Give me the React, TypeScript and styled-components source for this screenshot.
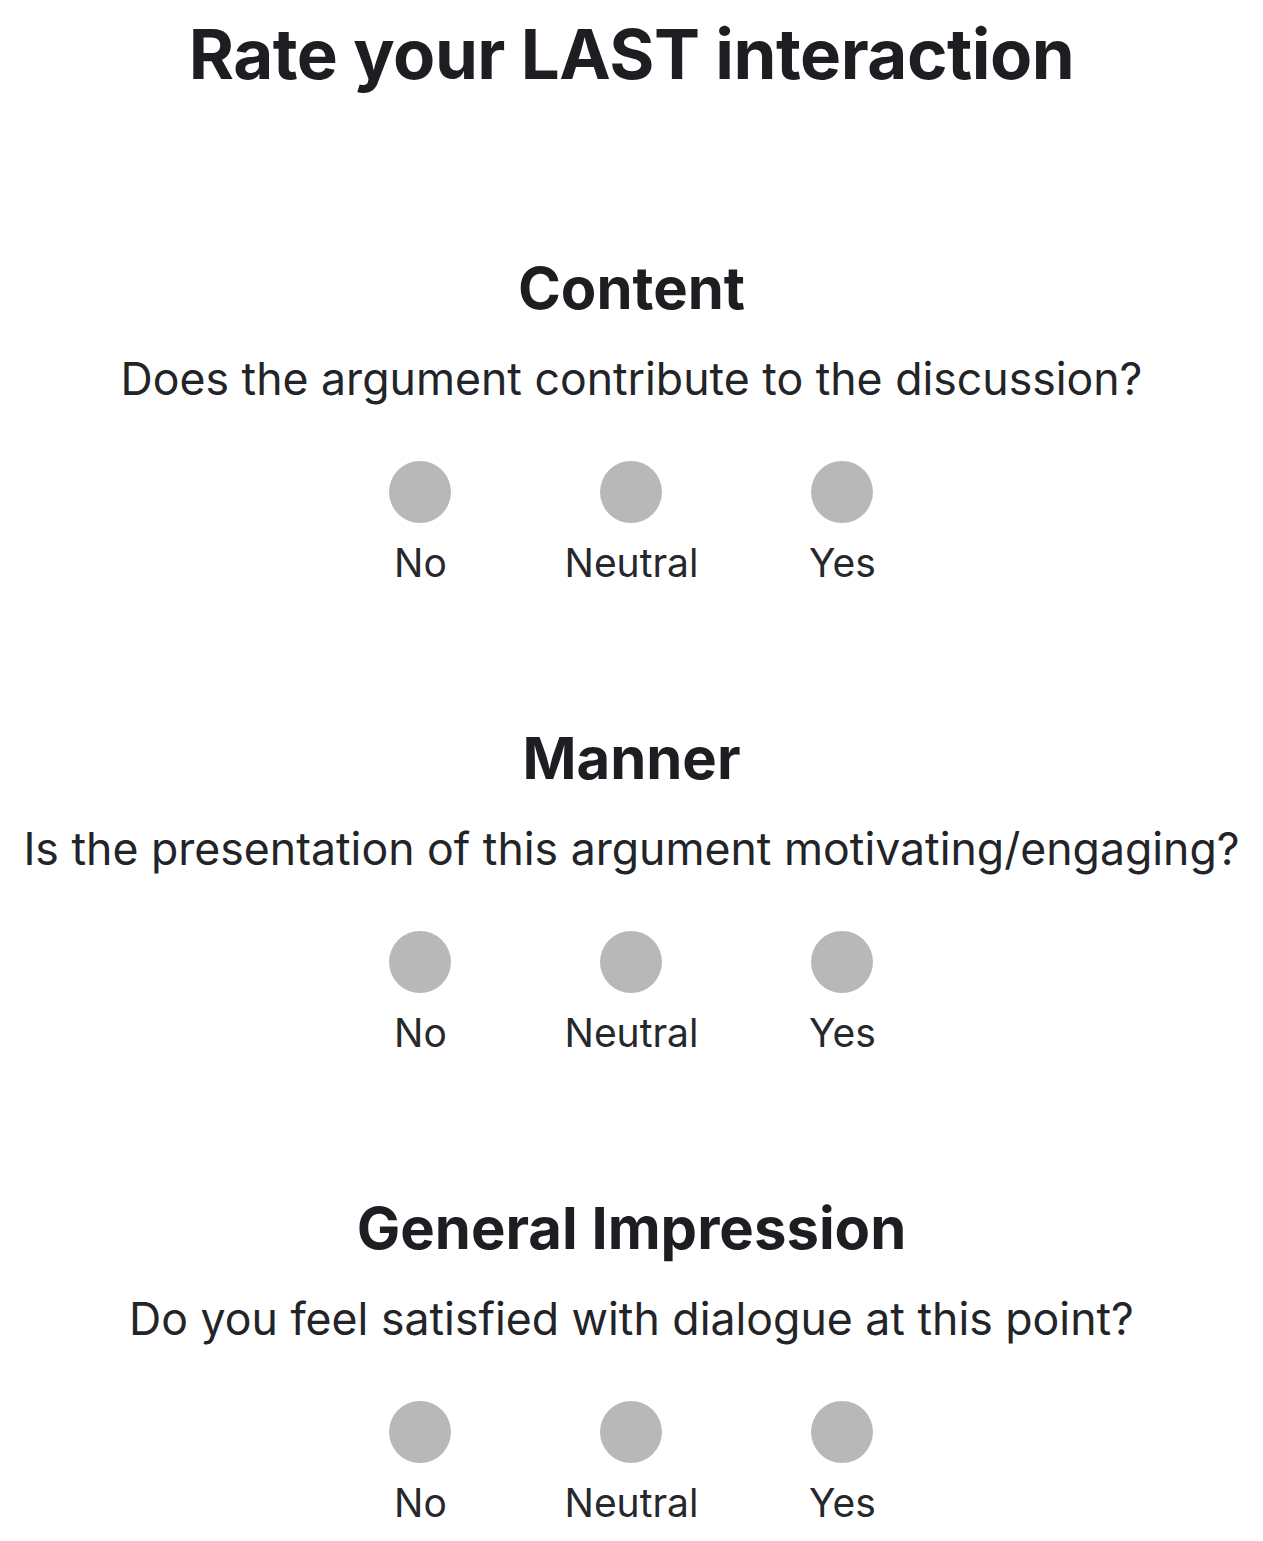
import React from 'react'
import styled, { createGlobalStyle } from 'styled-components'

const GlobalStyle = createGlobalStyle`
  body {
    margin: 0;
    background: #fff;
    font-family: Inter, "Noto Sans", "Liberation Sans", sans-serif;
    color: #1c1e21;
  }
`

const sections = [
  { title: 'Content', question: 'Does the argument contribute to the discussion?' },
  { title: 'Manner', question: 'Is the presentation of this argument motivating/engaging?' },
  { title: 'General Impression', question: 'Do you feel satisfied with dialogue at this point?' },
]

const options = ['No', 'Neutral', 'Yes']

export default function App() {
  return (
    <>
      <GlobalStyle />
      <Page>
        <Title>Rate your LAST interaction</Title>
        {sections.map((s) => (
          <Section key={s.title}>
            <Heading>{s.title}</Heading>
            <Question>{s.question}</Question>
            <Options>
              {options.map((o) => (
                <Option key={o}>
                  <Dot type="button" aria-label={o} />
                  <Label>{o}</Label>
                </Option>
              ))}
            </Options>
          </Section>
        ))}
      </Page>
    </>
  )
}

const Page = styled.div`
  display: flex;
  flex-direction: column;
  align-items: center;
  padding-top: 14px;
`
const Title = styled.h1`
  margin: 0;
  font-size: 69px;
  line-height: 80px;
  font-weight: 700;
  letter-spacing: -0.5px;
`
const Section = styled.section`
  display: flex;
  flex-direction: column;
  align-items: center;
  margin-top: 160px;
  & + & {
    margin-top: 138px;
  }
`
const Heading = styled.h2`
  margin: 0;
  font-size: 58px;
  line-height: 68px;
  font-weight: 700;
`
const Question = styled.p`
  margin: 30px 0 0;
  font-size: 44.6px;
  line-height: 54px;
  font-weight: 400;
  color: #222427;
`
const Options = styled.div`
  display: grid;
  grid-template-columns: repeat(3, 211px);
  margin-top: 55px;
`
const Option = styled.div`
  display: flex;
  flex-direction: column;
  align-items: center;
  gap: 17px;
`
const Dot = styled.button`
  width: 62px;
  height: 62px;
  border: none;
  padding: 0;
  border-radius: 50%;
  background: #b8b8b8;
  cursor: pointer;
`
const Label = styled.span`
  font-size: 39px;
  line-height: 46px;
  color: #26282b;
`
